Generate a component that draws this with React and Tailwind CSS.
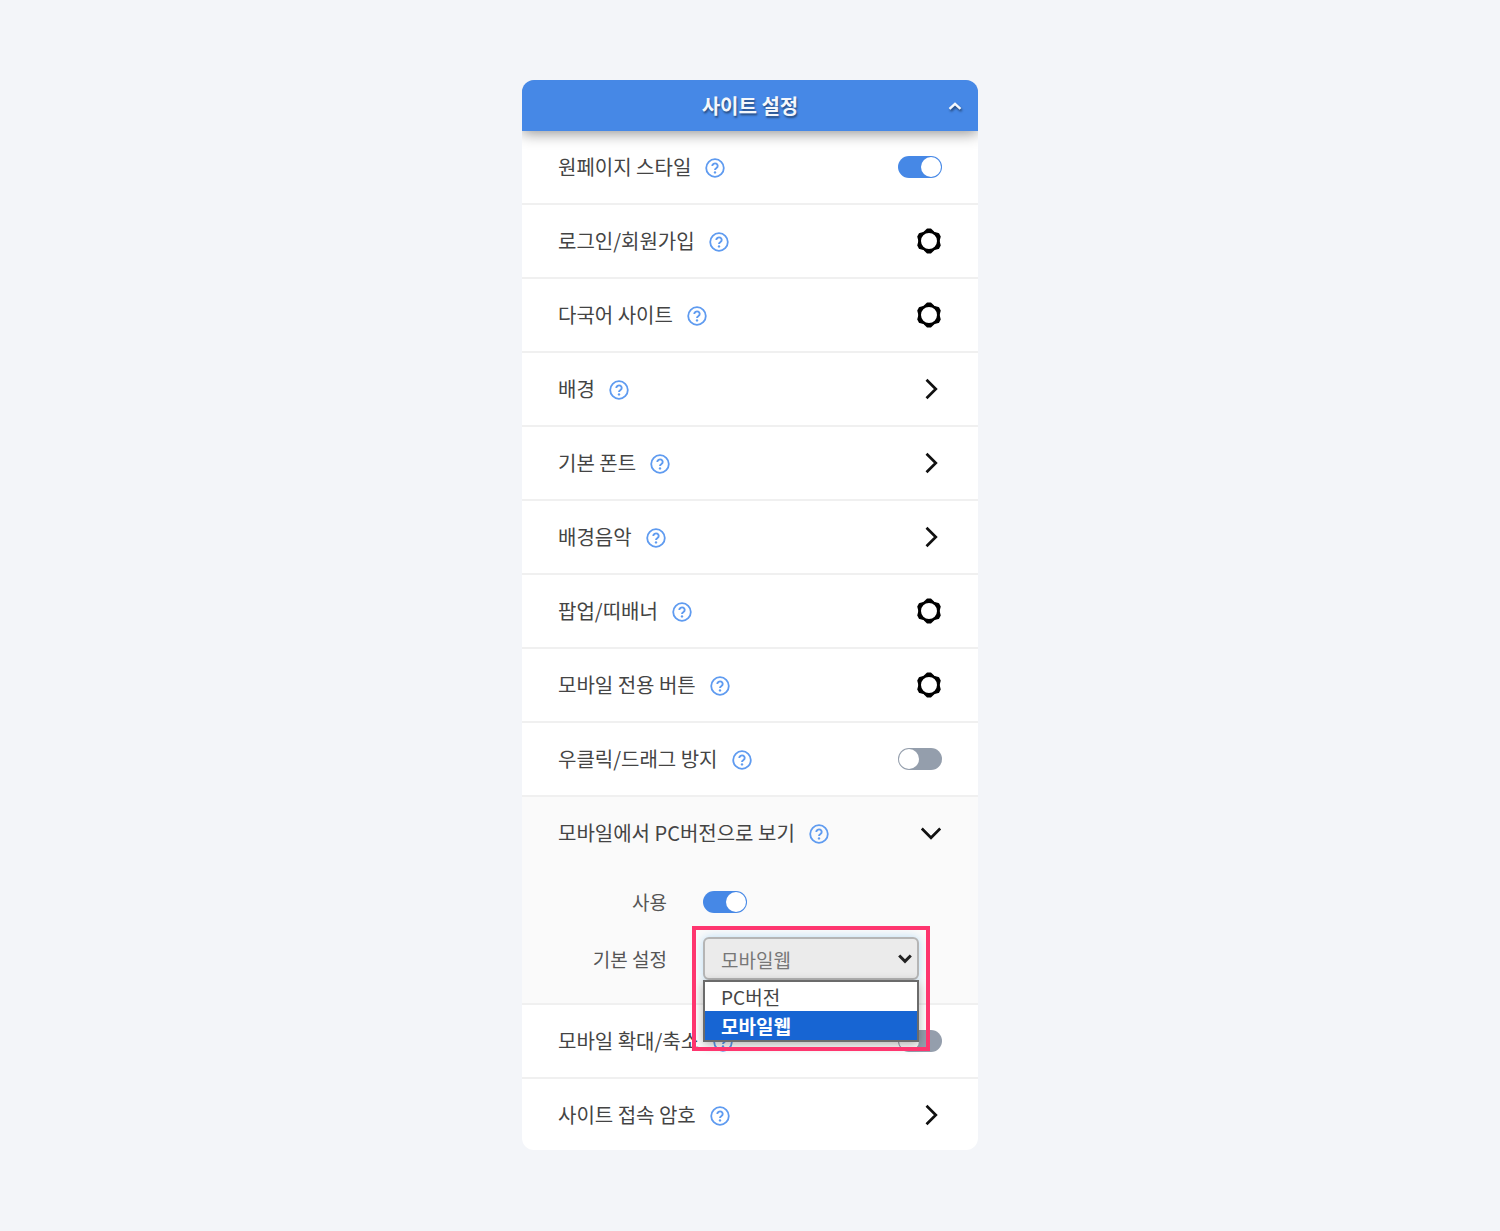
import { useState } from "react";

const ROWS = [
  { id: "onepage", label: "원페이지 스타일", type: "toggle", on: true },
  { id: "login", label: "로그인/회원가입", type: "gear" },
  { id: "language", label: "다국어 사이트", type: "gear" },
  { id: "background", label: "배경", type: "link" },
  { id: "font", label: "기본 폰트", type: "link" },
  { id: "music", label: "배경음악", type: "link" },
  { id: "popup", label: "팝업/띠배너", type: "gear" },
  { id: "mobile-button", label: "모바일 전용 버튼", type: "gear" },
  { id: "right-click", label: "우클릭/드래그 방지", type: "toggle", on: false },
];

const BOTTOM_ROWS = [
  { id: "zoom", label: "모바일 확대/축소", type: "toggle", on: false },
  { id: "password", label: "사이트 접속 암호", type: "link" },
];

const OPTIONS = ["PC버전", "모바일웹"];

const GearIcon = () => (
  <svg width="26" height="26" viewBox="-13 -13 26 26" aria-hidden="true">
    <circle r="9.3" fill="none" stroke="#000" strokeWidth="2.6" />
    {[0, 60, 120, 180, 240, 300].map((angle) => (
      <path
        key={angle}
        d="M-4.4 -8.8L-1.6 -11.6H1.6L4.4 -8.8A9.8 9.8 0 0 0 -4.4 -8.8Z"
        transform={`rotate(${angle})`}
        stroke="#000"
        strokeWidth="1.8"
        strokeLinejoin="round"
      />
    ))}
  </svg>
);

const Chevron = ({ down }) => (
  <svg
    className={down ? "rotate-90" : ""}
    width="22"
    height="22"
    viewBox="0 0 22 22"
    fill="none"
    stroke="#111"
    strokeWidth="2.7"
    aria-hidden="true"
  >
    <path d="M6.5 1.8L15.8 11L6.5 20.2" />
  </svg>
);

const HelpButton = ({ label }) => (
  <button type="button" aria-label={`${label} 도움말`} className="mt-0.5 shrink-0">
    <svg width="20" height="20" viewBox="0 0 20 20" fill="none" stroke="#5f9bf0">
      <circle cx="10" cy="10" r="8.8" strokeWidth="1.8" />
      <path d="M7.3 8a2.7 2.5 0 1 1 4.2 2c-.9.6-1.5 1-1.5 2.1" strokeWidth="1.9" />
      <circle cx="10" cy="14.4" r="1.2" fill="#5f9bf0" stroke="none" />
    </svg>
  </button>
);

const Toggle = ({ id, on }) => (
  <input
    id={id}
    type="checkbox"
    role="switch"
    defaultChecked={on}
    className="block h-[22px] w-11 shrink-0 cursor-pointer appearance-none rounded-full bg-[#949eac] p-px before:block before:size-5 before:rounded-full before:bg-white checked:bg-[#4688e6] checked:before:ml-[22px]"
  />
);

const Row = ({ row }) => (
  <li className="flex h-[74px] items-center justify-between border-b-2 border-[#f0f0f0] px-9 last:h-[71px] last:border-b-0">
    <div className="flex items-center gap-3.5">
      {row.type === "toggle" ? <label htmlFor={row.id}>{row.label}</label> : <span>{row.label}</span>}
      <HelpButton label={row.label} />
    </div>
    {row.type === "toggle" && <Toggle id={row.id} on={row.on} />}
    {row.type === "gear" && (
      <button type="button" aria-label={`${row.label} 설정`}>
        <GearIcon />
      </button>
    )}
    {row.type === "link" && (
      <button type="button" aria-label={`${row.label} 열기`}>
        <Chevron />
      </button>
    )}
  </li>
);

const ViewSelect = () => {
  const [value, setValue] = useState("모바일웹");

  return (
    <div className="relative z-10 w-[216px]">
      <select
        id="view-default"
        value={value}
        onChange={(e) => setValue(e.target.value)}
        className="block h-[43px] w-full appearance-none rounded-md border-2 border-[#b5b5b5] bg-[#ebebeb] px-4 pt-0.5 text-[19px] leading-7 text-[#777] shadow-[0_0_10px_#b9dcf5]"
      >
        {OPTIONS.map((option) => (
          <option key={option}>{option}</option>
        ))}
      </select>
      <svg
        className="pointer-events-none absolute top-4 right-[7px]"
        width="14"
        height="12"
        viewBox="0 0 14 12"
        fill="none"
        stroke="#222"
        strokeWidth="3"
        aria-hidden="true"
      >
        <path d="M1.2 2.5L7 8.3L12.8 2.5" />
      </svg>
      <ul
        role="listbox"
        aria-label="기본 설정"
        className="absolute inset-x-0 top-full border-2 border-[#6b6b6b] bg-white text-[19px] leading-[29px] text-[#444] shadow-[0_3px_10px_rgba(0,0,0,0.3)]"
      >
        {OPTIONS.map((option) => (
          <li
            key={option}
            role="option"
            aria-selected={option === value}
            onClick={() => setValue(option)}
            className="px-4 aria-selected:bg-[#1765d3] aria-selected:font-bold aria-selected:text-white"
          >
            {option}
          </li>
        ))}
      </ul>
      <div className="pointer-events-none absolute -inset-x-[11px] -top-[11px] h-[125px] border-4 border-[#fe366f]" />
    </div>
  );
};

const MobileViewSection = () => (
  <li className="border-b-2 border-[#f0f0f0] bg-[#fafafa] px-9 pb-[23px]">
    <div className="flex h-[71px] items-center justify-between">
      <div className="flex items-center gap-3.5">
        <span>모바일에서 PC버전으로 보기</span>
        <HelpButton label="모바일에서 PC버전으로 보기" />
      </div>
      <button type="button" aria-label="접기">
        <Chevron down />
      </button>
    </div>
    <div className="grid grid-cols-[109px_1fr] items-center gap-x-9 gap-y-6 pt-[23px] text-[19px] text-[#555]">
      <label htmlFor="view-use" className="text-right leading-[22px]">
        사용
      </label>
      <Toggle id="view-use" on />
      <label htmlFor="view-default" className="text-right leading-[22px]">
        기본 설정
      </label>
      <ViewSelect />
    </div>
  </li>
);

export default function App() {
  return (
    <main className="min-h-screen bg-[#f3f5f9] px-4 py-20 font-['Noto_Sans_CJK_KR','Noto_Sans',sans-serif] text-xl text-[#444]">
      <section className="mx-auto w-full max-w-[456px] overflow-hidden rounded-xl bg-white">
        <header className="relative flex h-[51px] items-center justify-center bg-[#4688e6] text-[#f4f7fc] shadow-[0_2px_14px_rgba(0,0,0,0.45)]">
          <h1 className="text-xl font-bold [text-shadow:1px_2px_2px_rgba(0,0,0,0.45)]">사이트 설정</h1>
          <button type="button" aria-label="닫기" className="absolute right-4">
            <svg
              className="drop-shadow-[1px_2px_1px_rgba(0,0,0,0.5)]"
              width="14"
              height="10"
              viewBox="0 0 14 10"
              fill="none"
              stroke="#f4f7fc"
              strokeWidth="2.4"
              aria-hidden="true"
            >
              <path d="M1.5 7.8L7 2.8L12.5 7.8" />
            </svg>
          </button>
        </header>
        <ul>
          {ROWS.map((row) => (
            <Row key={row.id} row={row} />
          ))}
          <MobileViewSection />
          {BOTTOM_ROWS.map((row) => (
            <Row key={row.id} row={row} />
          ))}
        </ul>
      </section>
    </main>
  );
}
